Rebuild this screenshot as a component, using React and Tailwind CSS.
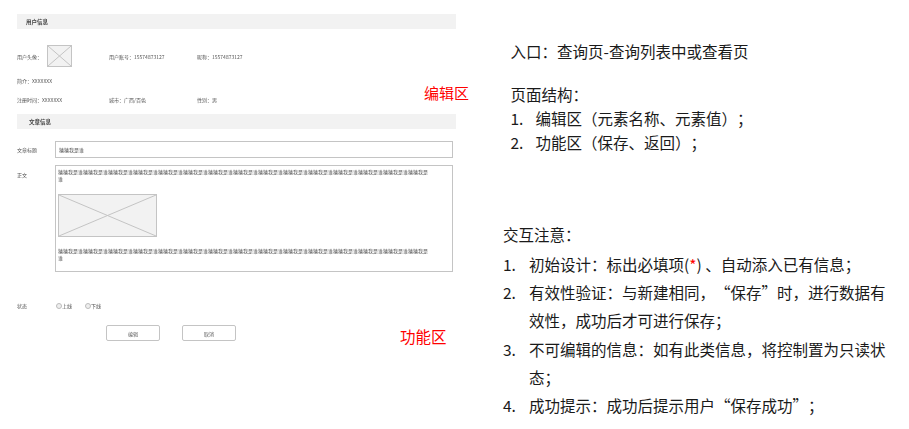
function Placeholder({ className }) {
  return (
    <div className={"border border-[#c4c4c4] bg-[#f2f2f2] " + className}>
      <svg className="block w-full h-full" viewBox="0 0 100 100" preserveAspectRatio="none">
        <line x1="0" y1="0" x2="100" y2="100" stroke="#c4c4c4" strokeWidth="1" vectorEffect="non-scaling-stroke" />
        <line x1="100" y1="0" x2="0" y2="100" stroke="#c4c4c4" strokeWidth="1" vectorEffect="non-scaling-stroke" />
      </svg>
    </div>
  );
}
function Bar({ children, pad }) {
  return (
    <div className={"w-[439px] ml-[17px] h-[15px] bg-[#f2f2f2] flex items-center pt-[2px] text-[5.5px] font-bold text-[#444] " + pad}>
      {children}
    </div>
  );
}
function Radio({ label }) {
  return (
    <span className="flex items-center">
      <span className="w-[6px] h-[6px] rounded-full border border-[#bbb] bg-[#eee]" />
      {label}
    </span>
  );
}
const para = "猜猜我是谁".repeat(15);
function Item({ n, children }) {
  return (
    <div className="flex h-[28.2px] items-center">
      <span className="w-[26px]">{n}</span>
      <span>{children}</span>
    </div>
  );
}
export default function App() {
  return (
    <div className="relative w-[909px] h-[429px] bg-white overflow-hidden flex [text-spacing-trim:space-all] font-['Noto_Sans_CJK_SC','Noto_Sans',sans-serif]">
      <div className="w-[503px] shrink-0 pt-[14px] text-[5px] text-[#555] leading-[7px] blur-[0.3px]">
        <Bar pad="pl-[9px]">用户信息</Bar>
        <div className="ml-[17px] mt-[16px] grid grid-cols-[92px_88px_1fr] items-center">
          <div className="flex items-center h-[22px]">
            <span className="w-[30px]">用户头像：</span>
            <Placeholder className="w-[25px] h-[22px]" />
          </div>
          <div>用户账号：15574873127</div>
          <div>昵称：15574873127</div>
          <div className="col-span-3 mt-[10px]">简介：XXXXXXX</div>
          <div className="mt-[12px]">注册时间：XXXXXXX</div>
          <div className="mt-[12px]">城市：广西/百色</div>
          <div className="mt-[12px]">性别：男</div>
        </div>
        <div className="mt-[11px]">
          <Bar pad="pl-[12px]">文章信息</Bar>
        </div>
        <div className="ml-[17px] mt-[12px] flex">
          <span className="w-[38px] leading-[17px]">文章标题</span>
          <div className="w-[398px] h-[17px] border border-[#c4c4c4] pl-[3px] flex items-center">猜猜我是谁</div>
        </div>
        <div className="ml-[17px] mt-[7px] flex">
          <span className="w-[38px] pt-[6px]">正文</span>
          <div className="w-[398px] h-[107px] border border-[#c4c4c4] pl-[2px] pt-[2px]">
            <div className="w-[371px] break-all">{para}</div>
            <Placeholder className="w-[99px] h-[43px] mt-[12px]" />
            <div className="w-[371px] break-all mt-[10px]">{para}</div>
          </div>
        </div>
        <div className="ml-[17px] mt-[30px] flex items-center h-[7px]">
          <span className="w-[39px]">状态</span>
          <span className="w-[29px]"><Radio label="上线" /></span>
          <Radio label="下线" />
        </div>
        <div className="ml-[106px] mt-[16px] flex gap-[22px]">
          <div className="w-[54px] h-[16px] border border-[#c4c4c4] rounded-[2px] flex items-center justify-center">编辑</div>
          <div className="w-[54px] h-[16px] border border-[#c4c4c4] rounded-[2px] flex items-center justify-center">取消</div>
        </div>
      </div>
      <div className="absolute left-[424px] top-[82px] text-[15px] leading-[22px] text-[#ff0000]">编辑区</div>
      <div className="absolute left-[400px] top-[325px] text-[15.5px] leading-[22px] text-[#ff0000]">功能区</div>
      <div className="flex-1 pt-[39px] text-[15.5px] text-[#1a1a1a] leading-[24px]">
        <div className="ml-[7.5px]">入口：查询页-查询列表中或查看页</div>
        <div className="ml-[7.5px] mt-[19px]">页面结构：</div>
        <div className="ml-[7.5px] flex"><span className="w-[25px]">1.</span>编辑区（元素名称、元素值）；</div>
        <div className="ml-[7.5px] flex"><span className="w-[25px]">2.</span>功能区（保存、返回）；</div>
        <div className="mt-[68px]">交互注意：</div>
        <div className="mt-[4px]">
          <Item n="1.">初始设计：标出必填项(<span className="text-[#ff0000]">*</span>) 、自动添入已有信息；</Item>
          <Item n="2.">有效性验证：与新建相同，“保存”时，进行数据有</Item>
          <Item>效性，成功后才可进行保存；</Item>
          <Item n="3.">不可编辑的信息：如有此类信息，将控制置为只读状</Item>
          <Item>态；</Item>
          <Item n="4.">成功提示：成功后提示用户“保存成功”；</Item>
        </div>
      </div>
    </div>
  );
}
